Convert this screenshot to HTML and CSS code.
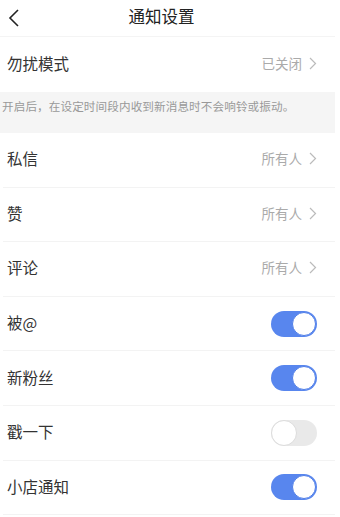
FILE: index.html
```html
<!DOCTYPE html>
<html lang="zh">
<head>
<meta charset="utf-8">
<link rel="stylesheet" href="styles.css">
</head>
<body>
<div class="page">
  <header class="header">
    <svg class="back" width="12" height="18" viewBox="0 0 12 18"><path d="M10 1 L2 9 L10 17" fill="none" stroke="#222" stroke-width="1.6"/></svg>
    <div class="title">通知设置</div>
  </header>
  <div class="row first">
    <span class="label">勿扰模式</span>
    <span class="value">已关闭<svg class="chev" width="8" height="13" viewBox="0 0 8 13"><path d="M1 1 L6.5 6.5 L1 12" fill="none" stroke="#bbb" stroke-width="1.2"/></svg></span>
  </div>
  <div class="note">开启后，在设定时间段内收到新消息时不会响铃或振动。</div>
  <div class="row">
    <span class="label">私信</span>
    <span class="value">所有人<svg class="chev" width="8" height="13" viewBox="0 0 8 13"><path d="M1 1 L6.5 6.5 L1 12" fill="none" stroke="#bbb" stroke-width="1.2"/></svg></span>
  </div>
  <div class="row">
    <span class="label">赞</span>
    <span class="value">所有人<svg class="chev" width="8" height="13" viewBox="0 0 8 13"><path d="M1 1 L6.5 6.5 L1 12" fill="none" stroke="#bbb" stroke-width="1.2"/></svg></span>
  </div>
  <div class="row">
    <span class="label">评论</span>
    <span class="value">所有人<svg class="chev" width="8" height="13" viewBox="0 0 8 13"><path d="M1 1 L6.5 6.5 L1 12" fill="none" stroke="#bbb" stroke-width="1.2"/></svg></span>
  </div>
  <div class="row">
    <span class="label">被@</span>
    <span class="switch on"><span class="knob"></span></span>
  </div>
  <div class="row">
    <span class="label">新粉丝</span>
    <span class="switch on"><span class="knob"></span></span>
  </div>
  <div class="row">
    <span class="label">戳一下</span>
    <span class="switch off"><span class="knob"></span></span>
  </div>
  <div class="row">
    <span class="label">小店通知</span>
    <span class="switch on"><span class="knob"></span></span>
  </div>
</div>
</body>
</html>
```
FILE: styles.css
```css
html, body {
  margin: 0;
  padding: 0;
  background: #fff;
}
body {
  font-family: "Noto Sans CJK SC", "Noto Sans", sans-serif;
  color: #333;
}
.page {
  width: 335px;
}
.header {
  height: 37px;
  box-sizing: border-box;
  border-bottom: 1px solid #f4f4f4;
  display: flex;
  align-items: center;
  justify-content: center;
  position: relative;
}
.back {
  position: absolute;
  left: 8px;
  top: 9px;
}
.title {
  font-size: 16.5px;
  color: #222;
  margin-left: -12px;
  margin-top: -4px;
}
.row {
  height: 54.6px;
  box-sizing: border-box;
  display: flex;
  align-items: center;
  justify-content: space-between;
  padding: 0 18px 3px 4px;
  border-bottom: 1px solid #f3f3f3;
  margin-left: 3px;
}
.row .switch {
  margin-top: 3px;
}
.row.first {
  height: 55px;
  border-bottom: none;
  margin-left: 0;
  padding-left: 7px;
}
.label {
  font-size: 15.5px;
  color: #333;
}
.value {
  font-size: 13.5px;
  color: #aaa;
  display: flex;
  align-items: center;
  gap: 7px;
}
.chev {
  margin-top: 1px;
}
.note {
  height: 41px;
  background: #f5f5f5;
  font-size: 11.6px;
  color: #999;
  padding: 6px 0 0 2px;
  box-sizing: border-box;
  letter-spacing: 0.1px;
}
.switch {
  width: 46px;
  height: 26px;
  border-radius: 13px;
  box-sizing: border-box;
  display: flex;
  align-items: center;
}
.switch.on {
  background: #5886ee;
  justify-content: flex-end;
  padding: 0 1px;
}
.switch.off {
  background: #e9e9e9;
  justify-content: flex-start;
  padding: 0;
}
.knob {
  width: 24px;
  height: 24px;
  border-radius: 50%;
  background: #fff;
  box-sizing: border-box;
}
.switch.on .knob {
  border: 1px solid #4f7ee8;
}
.switch.off .knob {
  width: 26px;
  height: 26px;
  border: 1px solid #dcdcdc;
}
```
